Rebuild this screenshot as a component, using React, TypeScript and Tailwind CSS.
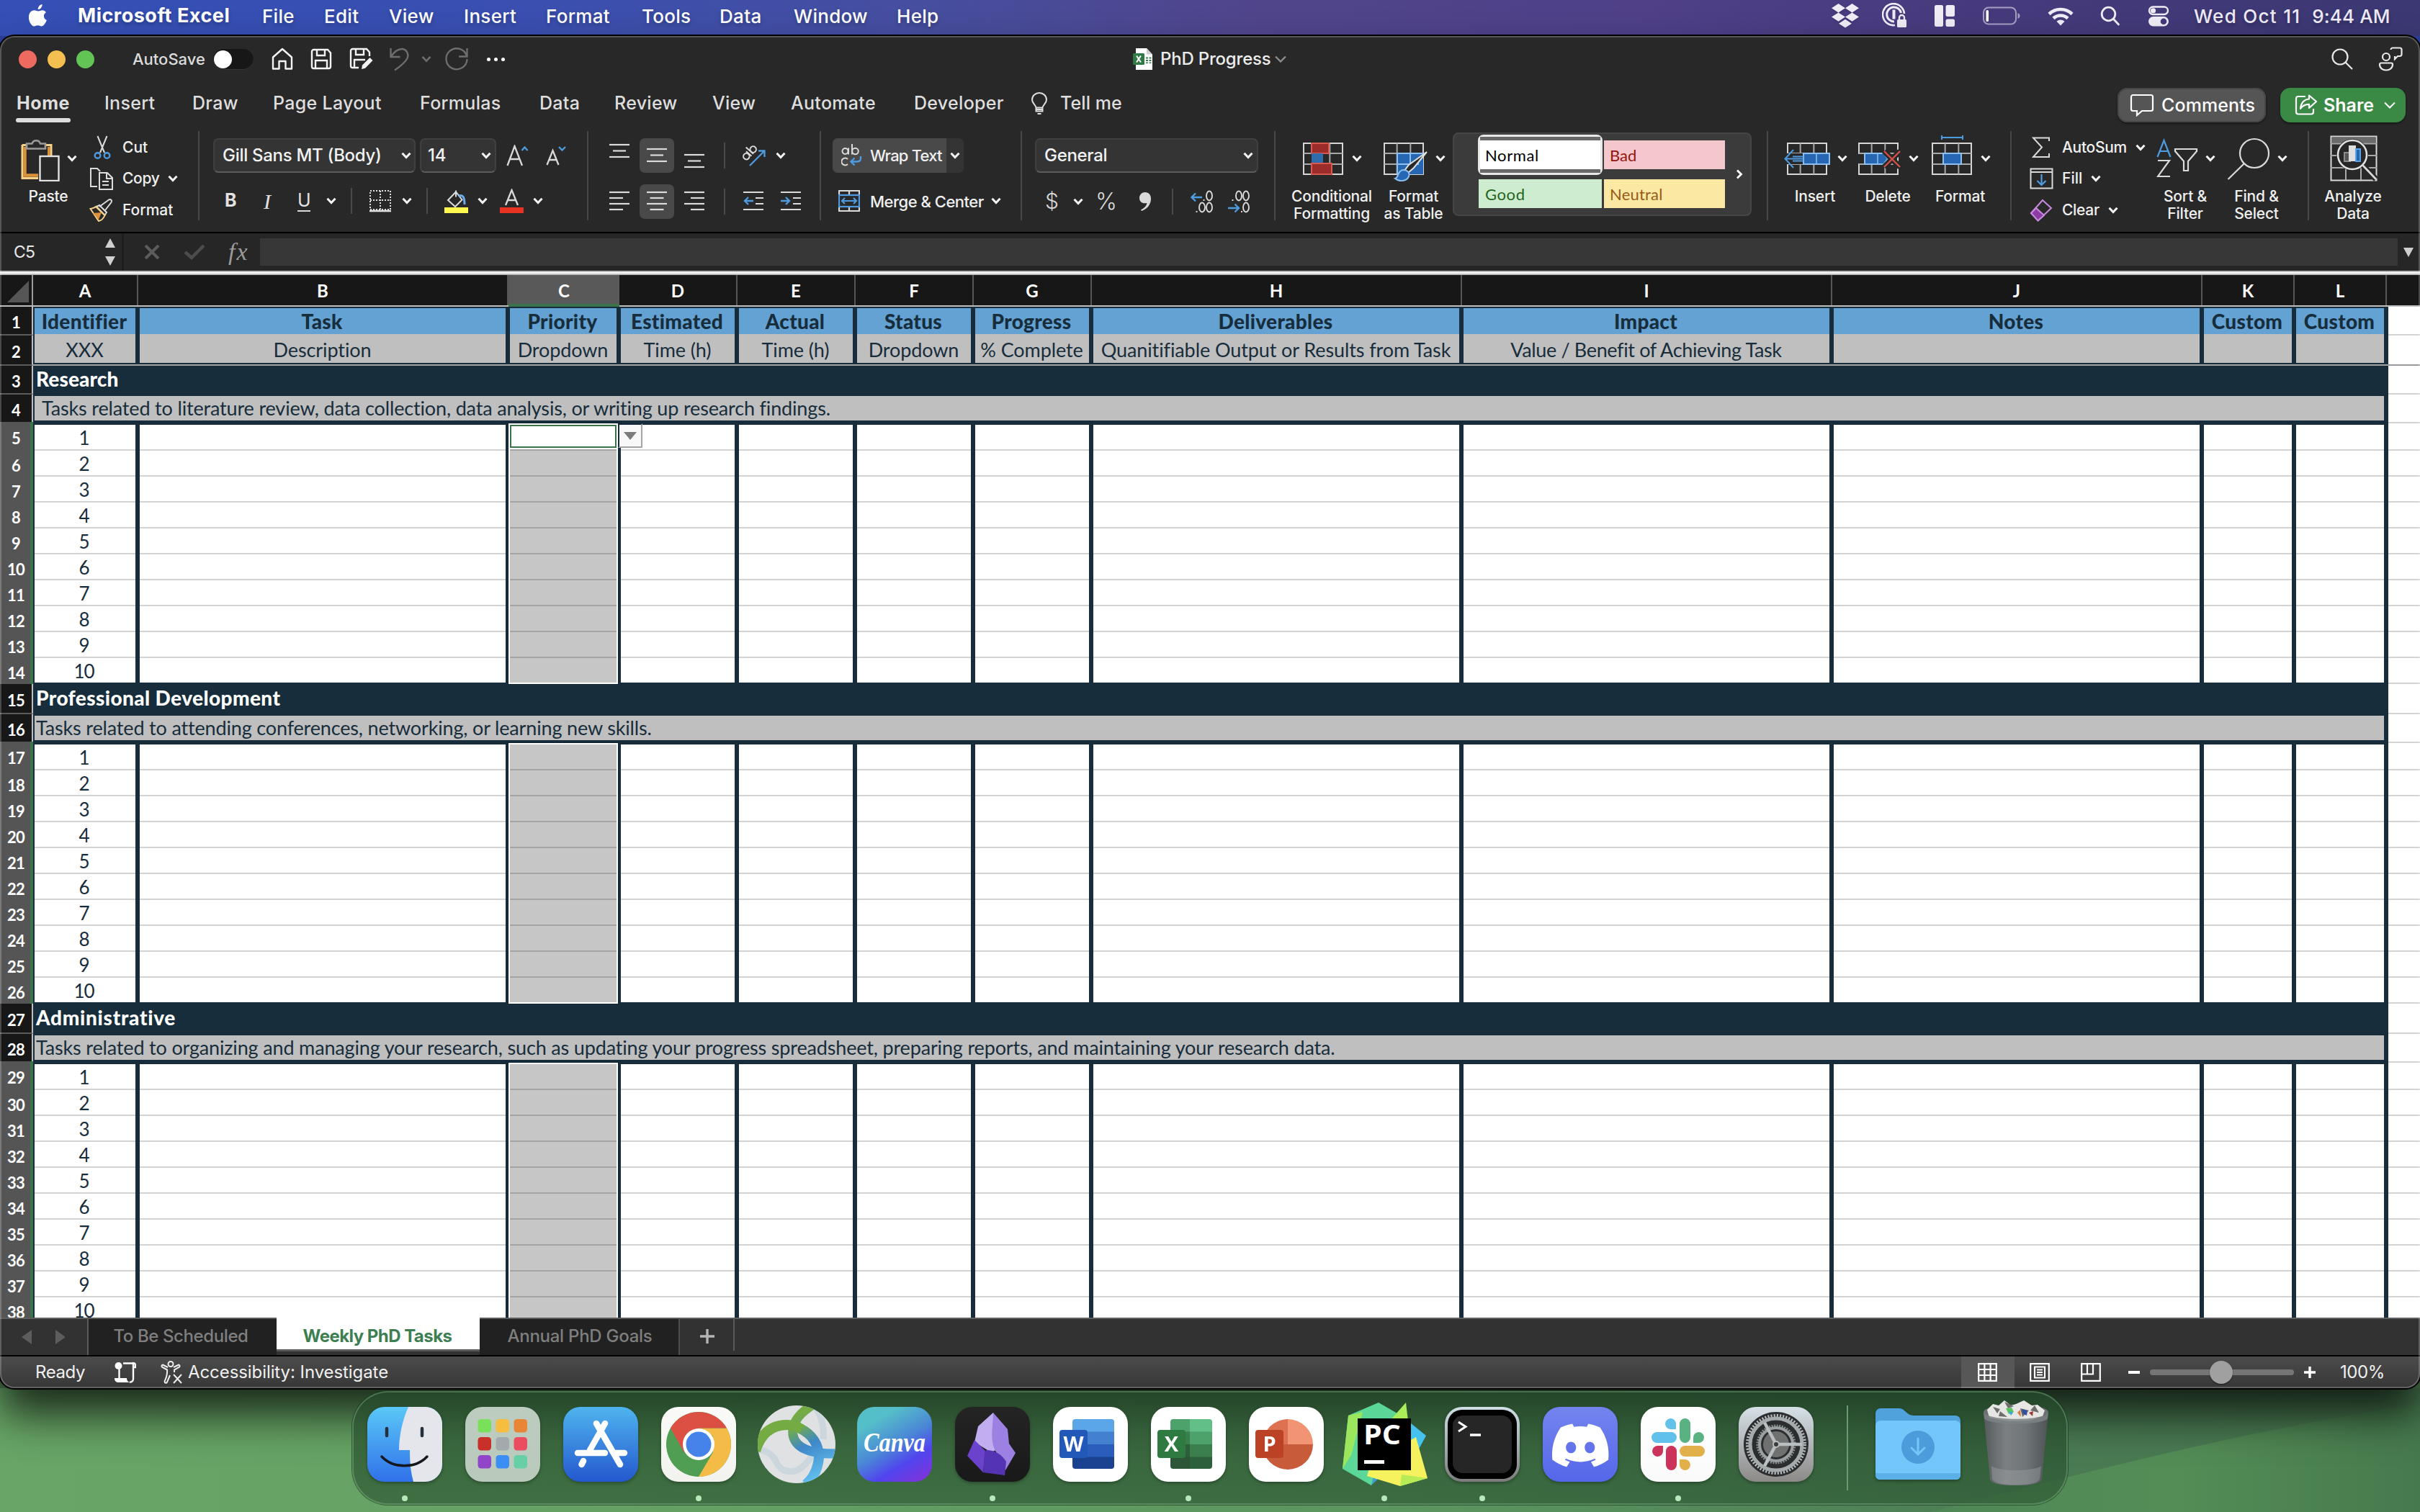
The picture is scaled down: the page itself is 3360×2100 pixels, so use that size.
import React from "react";

type Kids = { children?: React.ReactNode };

/* ---------- small shared pieces ---------- */

function Chev({ className = "" }: { className?: string }) {
  return (
    <svg className={`h-[10px] w-[14px] shrink-0 ${className}`} viewBox="0 0 14 10" fill="none" stroke="#f2f2f2" strokeWidth="3">
      <path d="M1.500 1.800 7 7.600l5.500-5.800" />
    </svg>
  );
}

function GroupSep() {
  return <div className="mt-[2px] h-[124px] w-[2px] shrink-0 bg-[#484848]" />;
}

function SmallSep({ className }: { className: string }) {
  return <div className={`h-[36px] w-[2px] shrink-0 bg-[#4a4a4a] ${className}`} />;
}

function BigButton({ className, icon, lines, chev = true }: { className: string; icon: React.ReactNode; lines: string[]; chev?: boolean }) {
  return (
    <div className={`flex shrink-0 flex-col items-center pt-[8px] ${className}`}>
      <div className="flex h-[64px] items-center gap-[10px]">
        {icon}
        {chev && <Chev />}
      </div>
      <div className="mt-[9px] -ml-[2px] text-center text-[21px] leading-[24px] font-medium tracking-[-0.2px] whitespace-nowrap text-[#f0f0f0]">
        {lines.map((l) => (
          <div key={l}>{l}</div>
        ))}
      </div>
    </div>
  );
}

/* ---------- menu bar ---------- */

const menuItems: [string, string][] = [
  ["File", "w-[86px]"],
  ["Edit", "w-[90px]"],
  ["View", "w-[104px]"],
  ["Insert", "w-[114px]"],
  ["Format", "w-[133px]"],
  ["Tools", "w-[108px]"],
  ["Data", "w-[103px]"],
  ["Window", "w-[143px]"],
  ["Help", "w-[80px]"],
];

function MenuBar() {
  return (
    <div className="flex h-[50px] shrink-0 items-start bg-[linear-gradient(90deg,#344fb6_0%,#3a4fb0_22%,#464e9f_38%,#50458b_52%,#4f4088_68%,#463a7c_82%,#3b3873_100%)] text-[26px] font-medium tracking-[0.3px] whitespace-nowrap text-white">
      <div className="flex h-[44px] w-full items-center [text-shadow:0_3px_5px_rgba(0,0,0,0.25)]">
        <svg className="ml-[40px] h-[32px] w-[28px]" viewBox="0 0 28 32" fill="#fff">
          <path d="M18.600 0c.2 1.800-.5 3.600-1.500 4.900-1.100 1.300-2.800 2.300-4.400 2.200-.2-1.700.6-3.500 1.600-4.700C15.400 1.100 17.200.1 18.600 0zM23.900 11.200c-1.900 1.200-3 2.800-3 5.100 0 2.600 1.400 4.600 3.900 5.600-.5 1.700-1.300 3.200-2.300 4.700-1.300 1.900-2.700 3.900-4.900 3.900-2.100 0-2.700-1.200-5.100-1.200s-3.200 1.200-5.100 1.300c-2.100.1-3.700-2.100-5-4C-.3 22.700-1.200 15.900 1.500 11.800 2.900 9.600 5.200 8.300 7.500 8.300c2.300 0 3.800 1.300 5.700 1.300 1.900 0 3-1.300 5.700-1.300 1.900 0 3.900 1 5 2.900z" />
        </svg>
        <div className="ml-[40px] w-[256px] text-[27px] font-bold tracking-[0.5px]">Microsoft Excel</div>
        {menuItems.map(([t, w]) => (
          <div key={t} className={`shrink-0 ${w}`}>{t}</div>
        ))}
        <div className="flex-1" />
        <div className="flex w-[817px] shrink-0 items-center text-[#eeeaf6]">
          <svg className="h-[34px] w-[38px] drop-shadow" viewBox="0 0 38 34" fill="#efecf6">
            <path d="M9.500 0 19 6.200 9.500 12.400 0 6.200zM28.500 0 38 6.200l-9.500 6.200L19 6.200zM9.500 12.400 19 18.600l-9.500 6.200L0 18.600zM28.500 12.400l9.500 6.200-9.500 6.200L19 18.600zM19 21.800l9 5.900-9 5.900-9-5.900z" />
          </svg>
          <svg className="ml-[32px] h-[36px] w-[36px]" viewBox="0 0 36 36" fill="none" stroke="#efecf6">
            <path d="M31 15A15 15 0 1 0 18 31" strokeWidth="2.600" />
            <path d="M26.500 14A10 10 0 1 0 17 26" strokeWidth="3" />
            <path d="M16.500 9.500v13" strokeWidth="4" />
            <rect x="21" y="23" width="13" height="11" rx="1.500" fill="#efecf6" stroke="none" />
            <path d="M24 24v-3.500a3.500 3.500 0 0 1 7 0V24" strokeWidth="2.400" />
          </svg>
          <svg className="ml-[37px] h-[30px] w-[28px]" viewBox="0 0 28 30" fill="#efecf6">
            <rect width="12" height="30" rx="2.500" />
            <rect x="15.500" width="12.500" height="16" rx="2.500" />
            <rect x="15.500" y="19.500" width="12.500" height="10.500" rx="2.500" />
          </svg>
          <svg className="ml-[39px] h-[26px] w-[52px]" viewBox="0 0 52 26" fill="none">
            <rect x="1" y="1.500" width="45" height="23" rx="7" stroke="#a79ec4" strokeWidth="2" />
            <rect x="4.500" y="5" width="3.500" height="16" rx="1.500" fill="#fff" />
            <path d="M48.500 9c2 .8 3 2.200 3 4s-1 3.200-3 4z" fill="#a79ec4" />
          </svg>
          <svg className="ml-[38px] h-[27px] w-[36px]" viewBox="0 0 36 27" fill="none" stroke="#efecf6" strokeWidth="4.600">
            <path d="M2 10.500a23 23 0 0 1 32 0" />
            <path d="M8 16.500a14.500 14.500 0 0 1 20 0" />
            <path d="M18 26.500l-5.500-5.800a8 8 0 0 1 11 0z" fill="#efecf6" stroke="none" />
          </svg>
          <svg className="ml-[37px] h-[28px] w-[28px]" viewBox="0 0 28 28" fill="none" stroke="#efecf6" strokeWidth="2.800">
            <circle cx="11.500" cy="11.500" r="9.300" />
            <path d="m18.500 18.500 7 7.500" strokeLinecap="round" />
          </svg>
          <svg className="ml-[38px] h-[29px] w-[30px]" viewBox="0 0 30 29" fill="none">
            <rect x="2" y="1.500" width="26" height="10.500" rx="5.250" stroke="#efecf6" strokeWidth="2.400" />
            <circle cx="7.500" cy="6.750" r="3.600" fill="#efecf6" />
            <rect x="1" y="15" width="28" height="13.500" rx="6.750" fill="#efecf6" />
            <circle cx="22" cy="21.700" r="4.300" fill="#443a7b" />
          </svg>
          <div className="ml-[34px] tracking-[1.3px]">Wed Oct 11</div>
          <div className="ml-[16px] tracking-[0.1px]">9:44 AM</div>
        </div>
      </div>
    </div>
  );
}

/* ---------- title bar ---------- */

function TitleBar() {
  return (
    <div className="flex h-[64px] items-center whitespace-nowrap">
      <div className="ml-[26px] flex gap-[15px]">
        <div className="h-[25px] w-[25px] rounded-full bg-[#ec6a5f]" />
        <div className="h-[25px] w-[25px] rounded-full bg-[#f4bf50]" />
        <div className="h-[25px] w-[25px] rounded-full bg-[#61c455]" />
      </div>
      <div className="ml-[53px] w-[112px] text-[22px] font-medium text-[#dcdcdc]">AutoSave</div>
      <div className="h-[29px] w-[56px] rounded-full bg-[#171717] shadow-[inset_0_-1px_1px_#3a3a3a]">
        <div className="mt-[2px] ml-[1px] h-[25px] w-[25px] rounded-full bg-white" />
      </div>
      <svg className="ml-[25px] h-[32px] w-[30px]" viewBox="0 0 30 32" fill="none" stroke="#f4f4f4" strokeWidth="2.400">
        <path d="M2 13.500 15 2l13 11.500V29.500h-8.500V19h-9v10.500H2z" strokeLinejoin="round" />
      </svg>
      <svg className="ml-[24px] h-[30px] w-[30px]" viewBox="0 0 30 30" fill="none" stroke="#f4f4f4" strokeWidth="2.400">
        <path d="M2 4.500A2.500 2.500 0 0 1 4.500 2H24l4 4.500v19a2.500 2.500 0 0 1-2.500 2.500h-21A2.500 2.500 0 0 1 2 25.500zM9 2v8h11V2M7 28V17h16v11" />
      </svg>
      <svg className="ml-[24px] h-[32px] w-[33px]" viewBox="0 0 33 32" fill="none" stroke="#f4f4f4" strokeWidth="2.400">
        <path d="M13 28H4.500A2.500 2.500 0 0 1 2 25.500v-21A2.500 2.500 0 0 1 4.500 2H24l4 4.500V12M9 2v8h11V2M7 28V17h15" />
        <path d="m17 30 1-5.500L28.500 14l4 4L22 28.700z" fill="#f4f4f4" stroke="none" />
      </svg>
      <svg className="ml-[22px] h-[34px] w-[30px]" viewBox="0 0 30 34" fill="none" stroke="#6d6d6d" strokeWidth="2.400">
        <path d="M2.500 2v12h13M3 13.500C8 6 13 2.500 19 3c6 1 9 8 6.500 13C23 21 16 27 8 32.500" />
      </svg>
      <svg className="ml-[15px] h-[10px] w-[14px]" viewBox="0 0 14 10" fill="none" stroke="#6d6d6d" strokeWidth="2.600"><path d="M1.500 1.800 7 7.600l5.500-5.800" /></svg>
      <svg className="ml-[18px] h-[34px] w-[34px]" viewBox="0 0 34 34" fill="none" stroke="#6d6d6d" strokeWidth="2.400">
        <path d="M31 13A14.500 14.500 0 1 0 31.500 17M31.500 2v11.500H20" />
      </svg>
      <div className="ml-[25px] flex gap-[5px]">
        <div className="h-[5px] w-[5px] rounded-full bg-white" />
        <div className="h-[5px] w-[5px] rounded-full bg-white" />
        <div className="h-[5px] w-[5px] rounded-full bg-white" />
      </div>
      <div className="flex-1" />
      <div className="flex w-[1787px] shrink-0 items-center">
        <svg className="h-[30px] w-[28px]" viewBox="0 0 28 30">
          <path d="M4 0h15l8 8.500V30H4z" fill="#fff" />
          <path d="M19 0v8.500h8z" fill="#cfcfcf" />
          <path d="M18 12.500h3v2h-3zm4.500 0h3v2h-3zM18 16h3v2h-3zm4.500 0h3v2h-3zM18 19.500h3v1.500h-3zm4.500 0h3v1.500h-3z" fill="#3f7f50" />
          <rect x="0" y="7" width="16" height="16" rx="1.500" fill="#2f7a44" />
          <path d="m5 10.500 6 9m0-9-6 9" stroke="#fff" strokeWidth="2" />
        </svg>
        <div className="ml-[10px] w-[158px] text-[24px] font-medium tracking-[-0.2px] text-[#ececec]">PhD Progress</div>
        <svg className="h-[10px] w-[18px]" viewBox="0 0 18 10" fill="none" stroke="#8c8c8c" strokeWidth="2.400"><path d="m2 1.500 7 7 7-7" /></svg>
        <svg className="ml-[1450px] h-[30px] w-[30px]" viewBox="0 0 30 30" fill="none" stroke="#e9e9e9" strokeWidth="2.200">
          <circle cx="12" cy="12" r="10.500" />
          <path d="m19.500 19.500 9.500 9.500" />
        </svg>
        <svg className="ml-[35px] h-[34px] w-[34px]" viewBox="0 0 34 34" fill="none" stroke="#e9e9e9" strokeWidth="2.200">
          <circle cx="11" cy="14" r="5" />
          <path d="M2 24.500A2 2 0 0 1 4 22.500h14a2 2 0 0 1 2 2c0 5-4 8-9 8s-9-3-9-8zM17.500 4a2.500 2.500 0 0 1 2.500-2.500h10A2.500 2.500 0 0 1 32.500 4v6.500A2.500 2.500 0 0 1 30 13h-3l-4 4v-4" />
        </svg>
      </div>
    </div>
  );
}

/* ---------- ribbon tabs ---------- */

const tabs: [string, string][] = [
  ["Insert", "w-[122px]"],
  ["Draw", "w-[112px]"],
  ["Page Layout", "w-[204px]"],
  ["Formulas", "w-[166px]"],
  ["Data", "w-[104px]"],
  ["Review", "w-[136px]"],
  ["View", "w-[109px]"],
  ["Automate", "w-[171px]"],
  ["Developer", "w-[162px]"],
];

function TabRow() {
  return (
    <div className="flex h-[66px] items-start text-[25px] font-medium tracking-[0.3px] whitespace-nowrap text-[#dedede]">
      <div className="ml-[22px] flex w-[123px] shrink-0 flex-col items-start">
        <div className="flex h-[50px] items-center pt-[9px] pl-[1px] font-bold tracking-[0.6px]">Home</div>
        <div className="h-[6px] w-[76px] rounded-full bg-[#dedede]" />
      </div>
      <div className="flex h-[59px] items-center">
        {tabs.map(([t, w]) => (
          <div key={t} className={`shrink-0 ${w}`}>{t}</div>
        ))}
        <svg className="h-[32px] w-[24px]" viewBox="0 0 24 32" fill="none" stroke="#dedede" strokeWidth="2">
          <path d="M7.500 21.500C7 17.500 2 15.500 2 10.500a10 9.500 0 0 1 20 0c0 5-5 7-5.500 11zM7.500 21.500v5h9v-5M7.500 24h9M9.500 30h5" />
        </svg>
        <div className="ml-[17px] tracking-[0.1px]">Tell me</div>
      </div>
      <div className="flex-1" />
      <div className="mt-[8px] flex h-[48px] w-[206px] items-center rounded-[14px] bg-[#555555] pl-[17px] text-white shadow-[inset_0_0_0_2px_#474747,0_2px_3px_rgba(0,0,0,0.4)]">
        <svg className="h-[32px] w-[34px]" viewBox="0 0 34 32" fill="none" stroke="#fff" strokeWidth="2.200">
          <path d="M2 4.500A2.500 2.500 0 0 1 4.500 2h25A2.500 2.500 0 0 1 32 4.500v17a2.500 2.500 0 0 1-2.500 2.500H17l-7 6v-6H4.500A2.500 2.500 0 0 1 2 21.500z" />
        </svg>
        <div className="mt-[2px] ml-[10px] tracking-[0.1px]">Comments</div>
      </div>
      <div className="mt-[8px] mr-[20px] ml-[20px] flex h-[48px] w-[174px] items-center rounded-[14px] bg-[#3a8945] pl-[20px] text-white shadow-[0_2px_3px_rgba(0,0,0,0.4)]">
        <svg className="h-[32px] w-[32px]" viewBox="0 0 32 32" fill="none" stroke="#fff" strokeWidth="2.200">
          <path d="M15 4H5a3 3 0 0 0-3 3v18.500a3 3 0 0 0 3 3h18a3 3 0 0 0 3-3V21" />
          <path d="M20 2.500 30 11l-10 9v-5.200c-5 0-9 1.700-12 6C9 13 13 8 20 7.500z" strokeLinejoin="round" />
        </svg>
        <div className="mt-[2px] ml-[8px] w-[83px] font-semibold tracking-[0px]">Share</div>
        <svg className="h-[10px] w-[18px]" viewBox="0 0 18 10" fill="none" stroke="#fff" strokeWidth="2"><path d="m2 1.500 7 7 7-7" /></svg>
      </div>
    </div>
  );
}

/* ---------- ribbon ---------- */

function Lines({ rows, w = 30, y0, step }: { rows: [number, number][]; w?: number; y0: number; step: number }) {
  return (
    <svg className="h-[48px] w-[30px] shrink-0" viewBox={`0 0 ${w} 48`} stroke="#dadada" strokeWidth="2.200">
      {rows.map(([a, b], i) => (
        <path key={i} d={`M${a} ${y0 + i * step}H${b}`} />
      ))}
    </svg>
  );
}

function Pressed({ children }: Kids) {
  return <div className="flex h-[48px] w-[48px] shrink-0 items-center justify-center rounded-[7px] bg-[#494949]">{children}</div>;
}

function ClipboardGroup() {
  return (
    <div className="flex w-[275px] shrink-0">
      <BigButton
        className="w-[118px] pl-[18px]"
        lines={["Paste"]}
        icon={
          <svg className="h-[64px] w-[54px]" viewBox="0 0 54 64" fill="none">
            <path d="M2 13.500h40V30M2 13v46.500h22" stroke="#f5d189" strokeWidth="3" />
            <path d="M5.500 16v39.500H24M38.500 16v14" stroke="#d9913a" strokeWidth="4.500" />
            <rect x="8" y="16" width="29" height="36" fill="#282828" />
            <path d="M8 18.500v-7h7.500a6 6 0 0 1 11.500 0H34v7z" stroke="#9a9a9a" strokeWidth="2.600" fill="#282828" />
            <rect x="26.500" y="29" width="26" height="34" stroke="#e2e2e2" strokeWidth="2.400" fill="#282828" />
          </svg>
        }
      />
      <div className="flex flex-col pt-[6px] pl-[6px] text-[21px] font-medium text-[#f0f0f0]">
        <div className="flex h-[36px] items-center pt-[2px]">
          <svg className="ml-[6px] h-[34px] w-[24px]" viewBox="0 0 24 34" fill="none">
            <path d="M5.500 1 15 24M18.500 1 9 24" stroke="#dcdcdc" strokeWidth="2" />
            <circle cx="5.500" cy="28" r="3.800" stroke="#4f9be0" strokeWidth="2.400" />
            <circle cx="18.500" cy="28" r="3.800" stroke="#4f9be0" strokeWidth="2.400" />
          </svg>
          <div className="ml-[16px]">Cut</div>
        </div>
        <div className="mt-[8px] flex h-[36px] items-center">
          <svg className="h-[32px] w-[34px]" viewBox="0 0 34 32" fill="none" stroke="#dcdcdc" strokeWidth="2">
            <path d="M11 27H2V2h9l4 4" />
            <path d="M14 8h11l7 7v16H14zM24 8v8h8M18 20h9M18 25h9" />
          </svg>
          <div className="ml-[12px] w-[63px] tracking-[-0.3px]">Copy</div>
          <Chev />
        </div>
        <div className="mt-[8px] flex h-[36px] items-center">
          <svg className="h-[34px] w-[34px]" viewBox="0 0 34 34" fill="none" strokeWidth="2">
            <path d="M14 12 27 2.500c3-1.500 5 1 3.500 3.500L22 17" stroke="#dcdcdc" />
            <path d="m10 12 4-2 10 10-2.500 4z" stroke="#dcdcdc" />
            <path d="M9 12C7 14 4 14.500 1.500 15L13 32c4-1 7-4 8.500-8z" stroke="#f5d189" />
            <path d="m5 21 12-1-4 10z" fill="#d9913a" />
          </svg>
          <div className="ml-[12px]">Format</div>
        </div>
      </div>
    </div>
  );
}

const fieldCls = "flex h-[48px] shrink-0 items-center rounded-[7px] border-2 border-[#404040] border-b-[#5c5c5c] bg-[#343434] text-[24px] font-medium tracking-[-0.3px] text-[#f2f2f2]";

function FontGroup() {
  return (
    <div className="flex w-[538px] shrink-0 flex-col gap-[16px] pt-[12px] pl-[19px] whitespace-nowrap">
      <div className="flex h-[48px] items-center">
        <div className={`w-[281px] pl-[11px] ${fieldCls}`}>
          <div className="w-[248px]">Gill Sans MT (Body)</div>
          <Chev />
        </div>
        <div className={`ml-[6px] w-[106px] pl-[9px] ${fieldCls}`}>
          <div className="w-[74px]">14</div>
          <Chev />
        </div>
        <svg className="ml-[14px] h-[30px] w-[31px]" viewBox="0 0 31 30" fill="none">
          <path d="m1.500 29 10-27 10.500 27M5 20h13.500" stroke="#dadada" strokeWidth="2.300" />
          <path d="m21.500 8 4-4.500 4 4.500" stroke="#4f9be0" strokeWidth="2.400" />
        </svg>
        <svg className="ml-[24px] h-[30px] w-[30px]" viewBox="0 0 30 30" fill="none">
          <path d="M1.500 28 9.500 8l8 20M4.500 21h10.500" stroke="#dadada" strokeWidth="2.300" />
          <path d="m18 3 4.500 4.500L27 3" stroke="#4f9be0" strokeWidth="2.400" />
        </svg>
      </div>
      <div className="flex h-[46px] items-center pl-[16px] text-[25px] text-[#e2e2e2]">
        <div className="w-[54px] font-bold">B</div>
        <div className="w-[47px] font-['Liberation_Serif'] text-[30px] italic">I</div>
        <div className="flex w-[40px] flex-col items-start">
          <div className="h-[28px] leading-[28px]">U</div>
          <div className="h-[2px] w-[18px] bg-[#dadada]" />
        </div>
        <Chev />
        <SmallSep className="ml-[20px]" />
        <svg className="ml-[23px] h-[32px] w-[32px]" viewBox="0 0 32 32" fill="none" stroke="#e0e0e0" strokeWidth="2">
          <path d="M2 2h28v26H2zM16 2v26M2 15h28" strokeDasharray="2 2" />
          <path d="M1 30h30" strokeWidth="2.600" />
        </svg>
        <Chev className="ml-[14px]" />
        <SmallSep className="ml-[20px]" />
        <svg className="ml-[23px] h-[34px] w-[34px]" viewBox="0 0 34 34" fill="none">
          <path d="M16 2.500v9M16 4.500 5 16l10 9 9.500-9.500z" stroke="#dadada" strokeWidth="2" />
          <path d="M20 10c6-2 8 2 8 12" stroke="#69aef0" strokeWidth="3" />
          <rect x="0" y="26" width="33" height="8" fill="#fff94f" />
        </svg>
        <Chev className="ml-[12px]" />
        <svg className="ml-[17px] h-[34px] w-[34px]" viewBox="0 0 34 34" fill="none">
          <path d="m8 23 8.500-21L25 23M11 16h11" stroke="#dadada" strokeWidth="2.300" />
          <rect x="0" y="26" width="33" height="8" fill="#e83323" />
        </svg>
        <Chev className="ml-[12px]" />
      </div>
    </div>
  );
}

function AlignGroup() {
  return (
    <div className="flex w-[321px] shrink-0 flex-col gap-[16px] pt-[12px] pl-[29px]">
      <div className="flex h-[48px] items-center">
        <Lines rows={[[0, 28], [5, 23], [0, 28]]} y0={9} step={8.5} />
        <div className="ml-[12px]"><Pressed><Lines rows={[[1, 29], [6, 24], [1, 29]]} y0={15} step={8.5} /></Pressed></div>
        <div className="ml-[14px]"><Lines rows={[[0, 28], [5, 23], [0, 28]]} y0={23} step={8.5} /></div>
        <SmallSep className="ml-[25px]" />
        <svg className="ml-[22px] h-[34px] w-[36px]" viewBox="0 0 36 34" fill="none" strokeWidth="2">
          <g stroke="#dadada" transform="rotate(-48 12 13)">
            <circle cx="5" cy="13" r="4.200" />
            <path d="M10 8v10M14 4v14" />
            <circle cx="18.500" cy="13.500" r="4.200" />
          </g>
          <path d="M12 31 32 11M24 10.500h8.500V19" stroke="#4f9be0" strokeWidth="2.300" />
        </svg>
        <Chev className="ml-[12px]" />
      </div>
      <div className="flex h-[48px] items-center">
        <Lines rows={[[0, 28], [0, 19], [0, 28], [0, 19]]} y0={11} step={8} />
        <div className="ml-[12px]"><Pressed><Lines rows={[[1, 29], [5.5, 24.5], [1, 29], [5.5, 24.5]]} y0={11} step={8} /></Pressed></div>
        <div className="ml-[14px]"><Lines rows={[[0, 28], [9, 28], [0, 28], [9, 28]]} y0={11} step={8} /></div>
        <SmallSep className="ml-[25px]" />
        <svg className="ml-[25px] h-[48px] w-[30px]" viewBox="0 0 30 48" fill="none" stroke="#dadada" strokeWidth="2.200">
          <path d="M0 11h28M17 19h11M17 27h11M0 35h28" />
          <path d="M14 23H2m5-5-5 5 5 5" stroke="#4f9be0" strokeWidth="2.400" />
        </svg>
        <svg className="ml-[22px] h-[48px] w-[30px]" viewBox="0 0 30 48" fill="none" stroke="#dadada" strokeWidth="2.200">
          <path d="M0 11h28M17 19h11M17 27h11M0 35h28" />
          <path d="M0 23h12m-5-5 5 5-5 5" stroke="#4f9be0" strokeWidth="2.400" />
        </svg>
      </div>
    </div>
  );
}

function WrapGroup() {
  return (
    <div className="flex w-[277px] shrink-0 flex-col gap-[16px] pt-[12px] pl-[16px] text-[22px] font-medium whitespace-nowrap text-[#f0f0f0]">
      <div className="flex h-[48px] w-[182px] items-center overflow-hidden rounded-[7px] bg-[#343434]">
        <div className="flex h-[48px] w-[158px] shrink-0 items-center bg-[#494949] pl-[12px]">
          <svg className="h-[34px] w-[30px]" viewBox="0 0 30 34" fill="none" stroke="#dadada" strokeWidth="2">
            <circle cx="5.500" cy="11" r="4" /><path d="M10 6.500v9M15 1v14.500" /><circle cx="19.500" cy="11" r="4.300" />
            <path d="M9 22a5 5 0 1 0 0 7" />
            <path d="M27 18v3c0 3-2 4.500-5 4.500h-8M18.500 20.500 13.500 25.500l5 5" stroke="#4f9be0" strokeWidth="2.400" />
          </svg>
          <div className="ml-[10px] tracking-[-0.8px]">Wrap Text</div>
        </div>
        <Chev className="ml-[5px]" />
      </div>
      <div className="flex h-[46px] items-center">
        <svg className="ml-[8px] h-[30px] w-[30px]" viewBox="0 0 30 30" fill="none" strokeWidth="2.200">
          <path d="M1 7V1h28v6M15 1v6M1 23v6h28v-6M15 23v6" stroke="#dadada" />
          <rect x="1" y="7" width="28" height="16" stroke="#4f9be0" />
          <path d="M5 15h20M9 11l-4 4 4 4M21 11l4 4-4 4" stroke="#4f9be0" />
        </svg>
        <div className="mt-[2px] ml-[14px] w-[168px] tracking-[-0.5px]">Merge &amp; Center</div>
        <Chev />
      </div>
    </div>
  );
}

function NumberGroup() {
  return (
    <div className="flex w-[350px] shrink-0 flex-col gap-[16px] pt-[12px] pl-[18px] whitespace-nowrap">
      <div className={`w-[310px] pl-[11px] ${fieldCls}`}>
        <div className="w-[276px]">General</div>
        <Chev />
      </div>
      <div className="flex h-[47px] items-center text-[#dadada]">
        <div className="ml-[14px] w-[39px] text-[30px] font-light">$</div>
        <Chev />
        <div className="ml-[17px] w-[61px] text-[32px] font-light tracking-tight">%</div>
        <svg className="h-[26px] w-[17px]" viewBox="0 0 17 26" fill="#dadada"><path d="M8 0c5 0 8 3.500 8 9 0 8-5 14-13 17l-1-1.500C7 22 10 18.500 10.500 15 4 16.500 0 13 0 8c0-4.500 3.500-8 8-8z" /></svg>
        <SmallSep className="ml-[28px]" />
        <svg className="ml-[23px] h-[34px] w-[34px]" viewBox="0 0 34 34" fill="none" stroke="#dadada" strokeWidth="1.900">
          <ellipse cx="27" cy="9" rx="4" ry="6.500" /><ellipse cx="17" cy="25" rx="4" ry="6.500" /><ellipse cx="27" cy="25" rx="4" ry="6.500" />
          <path d="M19.500 14v2M9.500 30v2" />
          <path d="M17 11H2m6-5.500L2.500 11 8 16.500" stroke="#4f9be0" strokeWidth="2.400" />
        </svg>
        <svg className="ml-[17px] h-[34px] w-[34px]" viewBox="0 0 34 34" fill="none" stroke="#dadada" strokeWidth="1.900">
          <ellipse cx="27" cy="9" rx="4" ry="6.500" /><ellipse cx="17" cy="9" rx="4" ry="6.500" /><ellipse cx="27" cy="25" rx="4" ry="6.500" />
          <path d="M8.500 14v2M21 30v2" />
          <path d="M2 26h15m-5.500-5.500L17 26l-5.500 5.500" stroke="#4f9be0" strokeWidth="2.400" />
        </svg>
      </div>
    </div>
  );
}

function GridBase({ w = 56 }: { w?: number }) {
  return (
    <g stroke="#d6d6d6" fill="none" strokeWidth="2">
      <path d={`M1 11h${w - 2}v43H1z`} />
      <path d={`M${w / 3} 11v43M${(w * 2) / 3} 11v43M1 25h${w - 2}M1 40h${w - 2}`} stroke="#a8a8a8" />
    </g>
  );
}

function StylesGroup() {
  return (
    <div className="flex w-[682px] shrink-0 pl-[19px]">
      <BigButton
        className="w-[120px]"
        lines={["Conditional", "Formatting"]}
        icon={
          <svg className="h-[64px] w-[58px]" viewBox="0 0 58 64">
            <GridBase w={56} />
            <rect x="12" y="11" width="24" height="14" fill="#9b2c2a" stroke="#d65a50" strokeWidth="2" />
            <rect x="12" y="25" width="16" height="15" fill="#2f6cab" />
            <rect x="12" y="39" width="28" height="15" fill="#9b2c2a" stroke="#d65a50" strokeWidth="2" />
          </svg>
        }
      />
      <BigButton
        className="w-[107px]"
        lines={["Format", "as Table"]}
        icon={
          <svg className="h-[64px] w-[62px]" viewBox="0 0 62 64" fill="none">
            <GridBase w={56} />
            <path d="M19 25h36v29H19z" fill="#2666b3" />
            <path d="M19 54V25h36M19 40h30M37 25v20" stroke="#8cc0f0" strokeWidth="2" />
            <path d="M60 23 42 45l-9 8-4-4 6-8z" fill="#282828" stroke="#dedede" strokeWidth="2" />
            <path d="M16 60c5-1 3-11 11-12 6 0 10 4 8 9-3 7-13 8-19 3z" fill="#2666b3" stroke="#8cc0f0" strokeWidth="2" />
          </svg>
        }
      />
      <div className="mt-[4px] flex h-[116px] w-[415px] items-center rounded-[8px] border-2 border-[#464646] bg-[#3b3b3b] pl-[34px] font-['Lato'] text-[22px]">
        <div className="grid grid-cols-[171px_168px] gap-x-[3px] gap-y-[14px]">
          <div className="relative flex h-[40px] items-center bg-white pl-[9px] tracking-[0.6px] text-black">
            Normal
            <div className="absolute -inset-x-[1px] -inset-y-[8px] rounded-[8px] border-[3px] border-[#e9e9e9]" />
            <div className="absolute inset-x-[2px] -top-[5px] h-[5px] bg-[#686868]" />
            <div className="absolute inset-x-[2px] -bottom-[5px] h-[5px] bg-[#686868]" />
          </div>
          <div className="flex h-[40px] items-center bg-[#f4c7cd] pl-[8px] text-[#95140f]">Bad</div>
          <div className="flex h-[40px] items-center bg-[#ceecd0] pl-[9px] tracking-[0.6px] text-[#23651b]">Good</div>
          <div className="flex h-[40px] items-center bg-[#fbe9a3] pl-[8px] tracking-[0.2px] text-[#955b17]">Neutral</div>
        </div>
        <svg className="ml-[15px] h-[14px] w-[10px]" viewBox="0 0 10 14" fill="none" stroke="#fff" strokeWidth="2.800"><path d="m2 1.500 5.500 5.500L2 12.500" /></svg>
      </div>
    </div>
  );
}

function CellsGroup() {
  return (
    <div className="flex w-[336px] shrink-0 pl-[16px]">
      <BigButton
        className="w-[100px]"
        lines={["Insert"]}
        icon={
          <svg className="h-[64px] w-[64px]" viewBox="0 0 64 64" fill="none">
            <g transform="translate(4 0)"><GridBase w={56} /></g>
            <rect x="0" y="25" width="26" height="15" fill="#282828" />
            <rect x="27" y="25" width="36" height="15" fill="#2666b3" stroke="#8cc0f0" strokeWidth="2" />
            <path d="M45 25v15" stroke="#8cc0f0" strokeWidth="1.500" />
            <path d="M27 32.500H2M13 20 1.500 32.500 13 45M27 29.500H12M27 35.500H12" stroke="#4f9be0" strokeWidth="2" />
          </svg>
        }
      />
      <BigButton
        className="w-[102px]"
        lines={["Delete"]}
        icon={
          <svg className="h-[64px] w-[60px]" viewBox="0 0 60 64" fill="none">
            <GridBase w={56} />
            <rect x="0" y="26" width="8" height="13" fill="#282828" />
            <path d="M9 25h26l6 7.500-6 7.500H9z" fill="#2666b3" stroke="#8cc0f0" strokeWidth="2" />
            <path d="M27 25v15" stroke="#8cc0f0" strokeWidth="1.500" />
            <path d="m36 22 22 22M58 22 36 44" stroke="#282828" strokeWidth="8" />
            <path d="m36 22 22 22M58 22 36 44" stroke="#d4504a" strokeWidth="2.400" />
          </svg>
        }
      />
      <BigButton
        className="w-[99px]"
        lines={["Format"]}
        icon={
          <svg className="h-[64px] w-[58px]" viewBox="0 0 58 64" fill="none">
            <GridBase w={56} />
            <rect x="16" y="25" width="25" height="15" fill="#2666b3" stroke="#8cc0f0" strokeWidth="2" />
            <path d="M14 3h29M14 0v6M43 0v6" stroke="#4f9be0" strokeWidth="2" />
          </svg>
        }
      />
    </div>
  );
}

function EditGroup() {
  return (
    <div className="flex w-[411px] shrink-0 pl-[25px] whitespace-nowrap">
      <div className="flex w-[164px] shrink-0 flex-col pt-[6px] text-[21px] font-medium text-[#f0f0f0]">
        <div className="flex h-[36px] items-center pt-[2px]">
          <svg className="ml-[3px] h-[30px] w-[26px]" viewBox="0 0 26 30" fill="none" stroke="#dadada" strokeWidth="2"><path d="M24 6V1.500H2L14 14.500 2 28h22v-5" /></svg>
          <div className="ml-[16px] w-[102px] tracking-[-0.3px]">AutoSum</div>
          <Chev />
        </div>
        <div className="mt-[8px] flex h-[36px] items-center">
          <svg className="h-[30px] w-[33px]" viewBox="0 0 33 30" fill="none" stroke="#dadada" strokeWidth="2">
            <path d="M1.500 1.500h30v27h-30zM1.500 6h30" />
            <path d="M16.500 9v15m-6-6 6 6 6-6" stroke="#4f9be0" strokeWidth="2.200" />
          </svg>
          <div className="ml-[12px] w-[40px]">Fill</div>
          <Chev />
        </div>
        <div className="mt-[8px] flex h-[36px] items-center">
          <svg className="h-[32px] w-[32px]" viewBox="0 0 32 32" fill="none" stroke="#c98add" strokeWidth="2">
            <path d="M18 2 30 13 12 30 2 20z" />
            <path d="m9 13 11 10-8.500 7.500L2 20z" fill="#8c3ca5" />
          </svg>
          <div className="ml-[13px] w-[64px] tracking-[-0.3px]">Clear</div>
          <Chev />
        </div>
      </div>
      <BigButton
        className="w-[106px]"
        lines={["Sort &", "Filter"]}
        icon={
          <svg className="h-[64px] w-[58px]" viewBox="0 0 58 64" fill="none" strokeWidth="2.200">
            <path d="m1.500 30 9-23 9 23M5 22h11.500" stroke="#4f9be0" />
            <path d="M2 35h16L2 57h17M26 19h30v3L44 36v13h-6V36L26 22z" stroke="#dadada" />
          </svg>
        }
      />
      <BigButton
        className="w-[92px]"
        lines={["Find &", "Select"]}
        icon={
          <svg className="h-[64px] w-[60px]" viewBox="0 0 60 64" fill="none" stroke="#dadada" strokeWidth="2.200">
            <circle cx="38" cy="25" r="20" />
            <path d="M24 39 1.500 61" />
          </svg>
        }
      />
    </div>
  );
}

function AnalyzeGroup() {
  return (
    <BigButton
      className="w-[124px]"
      chev={false}
      lines={["Analyze", "Data"]}
      icon={
        <svg className="h-[64px] w-[66px]" viewBox="0 0 66 64" fill="none" strokeWidth="2">
          <path d="M1.500 1.500h63v61h-63z" stroke="#dadada" />
          <path d="M2.500 2.500h61v8h-61z" fill="#6a6a6a" />
          <path d="M1 11.500h64M1 28h64M1 45h64M22 45v17M43 45v17" stroke="#a9a9a9" />
          <circle cx="31" cy="27" r="22" fill="#282828" />
          <circle cx="31" cy="27" r="20" stroke="#e2e2e2" strokeWidth="2.600" />
          <path d="M46 42 64 61" stroke="#282828" strokeWidth="8" />
          <path d="M45 41 64 61" stroke="#dadada" strokeWidth="2.600" />
          <rect x="20" y="24" width="8" height="12" fill="#555" stroke="#8c8c8c" />
          <rect x="26" y="14" width="10" height="22" fill="#dedede" />
          <rect x="36" y="19" width="6" height="17" fill="#2666b3" stroke="#5aa2e6" />
        </svg>
      }
    />
  );
}

function Ribbon() {
  return (
    <div className="flex h-[142px] items-start">
      <ClipboardGroup />
      <GroupSep />
      <FontGroup />
      <GroupSep />
      <AlignGroup />
      <GroupSep />
      <WrapGroup />
      <GroupSep />
      <NumberGroup />
      <GroupSep />
      <StylesGroup />
      <GroupSep />
      <CellsGroup />
      <GroupSep />
      <EditGroup />
      <GroupSep />
      <AnalyzeGroup />
    </div>
  );
}

/* ---------- formula bar ---------- */

function FormulaBar() {
  return (
    <div className="flex h-[54px] items-center border-t-2 border-black bg-[#262626]">
      <div className="ml-[19px] w-[126px] text-[23px] tracking-[-0.7px] text-[#e8e8e8]">C5</div>
      <svg className="h-[38px] w-[16px]" viewBox="0 0 16 38" fill="#cfcfcf"><path d="m8 0 7 13H1zM8 38l7-13H1z" /></svg>
      <div className="ml-[8px] h-[52px] w-[3px] bg-[#1d1d1d]" />
      <svg className="ml-[28px] h-[20px] w-[22px]" viewBox="0 0 22 20" fill="none" stroke="#5c5c5c" strokeWidth="4"><path d="m2 1 18 18M20 1 2 19" /></svg>
      <svg className="ml-[33px] h-[22px] w-[30px]" viewBox="0 0 30 22" fill="none" stroke="#4c4c4c" strokeWidth="4.500"><path d="m2 11 9 8L28 2" /></svg>
      <div className="ml-[32px] w-[44px] font-['Liberation_Serif'] text-[34px] leading-none tracking-[2px] text-[#9a9a9a] italic">fx</div>
      <div className="h-[38px] w-[2968px] shrink-0 bg-[#373737]" />
      <svg className="ml-[8px] h-[13px] w-[14px]" viewBox="0 0 14 13" fill="#cfcfcf"><path d="M0 0h14L7 13z" /></svg>
    </div>
  );
}

/* ---------- sheet ---------- */

const columns: { letter: string; w: string; head: string; sub: string }[] = [
  { letter: "A", w: "w-[146px]", head: "Identifier", sub: "XXX" },
  { letter: "B", w: "w-[514px]", head: "Task", sub: "Description" },
  { letter: "C", w: "w-[154px]", head: "Priority", sub: "Dropdown" },
  { letter: "D", w: "w-[164px]", head: "Estimated", sub: "Time (h)" },
  { letter: "E", w: "w-[164px]", head: "Actual", sub: "Time (h)" },
  { letter: "F", w: "w-[164px]", head: "Status", sub: "Dropdown" },
  { letter: "G", w: "w-[164px]", head: "Progress", sub: "% Complete" },
  { letter: "H", w: "w-[514px]", head: "Deliverables", sub: "Quanitifiable Output or Results from Task" },
  { letter: "I", w: "w-[514px]", head: "Impact", sub: "Value / Benefit of Achieving Task" },
  { letter: "J", w: "w-[514px]", head: "Notes", sub: "" },
  { letter: "K", w: "w-[128px]", head: "Custom", sub: "" },
  { letter: "L", w: "w-[128px]", head: "Custom", sub: "" },
];

const sections = [
  { title: "Research", track: "tracking-[0.1px]", indent: true, text: "Tasks related to literature review, data collection, data analysis, or writing up research findings." },
  { title: "Professional Development", track: "tracking-[0.4px]", indent: false, text: "Tasks related to attending conferences, networking, or learning new skills." },
  { title: "Administrative", track: "tracking-[0.7px]", indent: false, text: "Tasks related to organizing and managing your research, such as updating your progress spreadsheet, preparing reports, and maintaining your research data." },
];

const ten = [1, 2, 3, 4, 5, 6, 7, 8, 9, 10];

function RowNumber({ n, h, selected = false, last = false }: { n: number; h: string; selected?: boolean; last?: boolean }) {
  return (
    <div
      className={`flex w-[46px] shrink-0 items-center justify-center pt-[4px] ${h} ${
        selected ? "border-r-4 border-[#3b744a] bg-[#555555] pl-[2px]" : `border-r-2 border-r-[#bdbdbd] bg-[#171717] ${last ? "" : "border-b-2 border-b-[#5a5a5a]"}`
      }`}
    >
      {n}
    </div>
  );
}

function RowNumbers() {
  return (
    <div className="flex w-[46px] shrink-0 flex-col font-['Lato'] text-[22px] font-bold tracking-[-0.8px] text-white">
      <RowNumber n={1} h="h-[40px]" />
      <RowNumber n={2} h="h-[42px]" />
      {sections.map((s, i) => {
        const base = 3 + i * 12;
        return (
          <React.Fragment key={s.title}>
            <RowNumber n={base} h={i === 0 ? "h-[40px]" : "h-[42px]"} />
            <RowNumber n={base + 1} h="h-[38px]" last />
            {ten.map((t) => (
              <RowNumber key={t} n={base + 1 + t} h={t === 1 ? "h-[40px]" : "h-[36px]"} selected />
            ))}
          </React.Fragment>
        );
      })}
    </div>
  );
}

function ColumnHeader() {
  return (
    <div className="flex h-[44px] shrink-0 border-b-2 border-[#bdbdbd] bg-[#171717] font-['Lato'] text-[24px] font-bold text-white">
      <div className="flex w-[46px] shrink-0 items-end justify-end border-r-2 border-[#9a9a9a] pr-[4px] pb-[4px]">
        <svg className="h-[30px] w-[30px]" viewBox="0 0 30 30" fill="#565656"><path d="M30 0v30H0z" /></svg>
      </div>
      {columns.map((c) =>
        c.letter === "C" ? (
          <div key="C" className={`-mb-[2px] flex shrink-0 items-center justify-center border-b-4 border-[#3b744a] bg-[#595959] pt-[4px] ${c.w}`}>C</div>
        ) : (
          <div key={c.letter} className={`flex shrink-0 items-center justify-center border-r-2 border-[#565656] pt-[2px] ${c.w}`}>{c.letter}</div>
        )
      )}
    </div>
  );
}

function Selection({ first, className }: { first: boolean; className: string }) {
  return (
    <div className={`absolute left-[658px] w-[152px] border-2 border-white ${className}`}>
      {first && <div className="absolute top-0 left-0 h-[34px] w-[148px] bg-white" />}
      {first && <div className="absolute top-0 left-0 h-[32px] w-[148px] border-2 border-[#3b744a] bg-white" />}
      <div className="absolute -inset-[3px] border border-[#0e2231]" />
      {first && (
        <div className="absolute -top-[2px] left-[150px] flex h-[34px] w-[34px] items-center justify-center border-2 border-[#a5a5a5] border-t-[#14283a] border-l-[#14283a] bg-[#f8f8f8]">
          <svg className="h-[11px] w-[18px]" viewBox="0 0 18 11" fill="#7c7c7c"><path d="M0 0h18L9 11z" /></svg>
        </div>
      )}
    </div>
  );
}

function TaskRow({ n }: { n: number }) {
  return (
    <div className="flex h-[36px] shrink-0">
      {columns.map((c) => (
        <div key={c.letter} className={`flex h-[36px] shrink-0 border-r-[6px] border-[#182d3b] ${c.w}`}>
          <div
            className={`flex flex-1 items-center justify-center border-b-2 ${n === 10 ? "border-[#182d3b]" : c.letter === "C" ? "border-[#a4a4a4]" : "border-[#d3d3d3]"} ${
              c.letter === "C" ? "bg-[#c6c6c6]" : "bg-white"
            }`}
          >
            {c.letter === "A" && <span className="mt-[1px] -ml-[3px] text-[26px] tracking-[-1px]">{n}</span>}
          </div>
        </div>
      ))}
    </div>
  );
}

function Table() {
  return (
    <div className="flex w-[3270px] shrink-0 flex-col border-l-2 border-[#182d3b] font-['Lato'] text-[27px] leading-none whitespace-nowrap text-[#182d3b]">
      <div className="flex h-[38px] shrink-0 border-t-2 border-[#182d3b] text-[28px] font-black tracking-[0.3px]">
        {columns.map((c) => (
          <div key={c.letter} className={`flex shrink-0 items-center justify-center border-r-[6px] border-[#182d3b] bg-[#63a2d3] pr-[2px] ${c.w}`}>{c.head}</div>
        ))}
      </div>
      <div className="flex h-[42px] shrink-0 border-b-2 border-[#182d3b] tracking-[-0.1px]">
        {columns.map((c) => (
          <div key={c.letter} className={`flex shrink-0 items-center justify-center border-r-[6px] border-[#182d3b] bg-[#bfbfbf] pt-[3px] pr-[1px] ${c.letter === "I" ? "tracking-[-0.36px]" : ""} ${c.w}`}>{c.sub}</div>
        ))}
      </div>
      <div className="-ml-[2px] h-[2px] shrink-0 bg-[#a3a3a3]" />
      {sections.map((s, i) => (
        <div key={s.title} className="relative flex shrink-0 flex-col">
          <div className={`flex shrink-0 items-center bg-[#182d3b] pb-[6px] pl-[2px] text-[28px] font-black text-white ${s.track} ${i === 0 ? "h-[42px]" : "h-[44px]"}`}>{s.title}</div>
          <div className={`flex h-[40px] shrink-0 items-center border-r-[6px] border-b-[6px] border-[#182d3b] bg-[#bfbfbf] pb-[2px] tracking-[-0.16px] ${s.indent ? "pl-[10px]" : "pl-[2px]"}`}>{s.text}</div>
          {ten.map((n) => (
            <TaskRow key={n} n={n} />
          ))}
          <Selection first={i === 0} className={i === 0 ? "top-[80px] h-[362px]" : "top-[82px] h-[362px]"} />
        </div>
      ))}
    </div>
  );
}

function Margin() {
  return (
    <div className="flex flex-1 flex-col bg-white">
      <div className="h-[40px] shrink-0 border-b-2 border-[#d3d3d3]" />
      <div className="h-[42px] shrink-0 border-b-2 border-[#999999]" />
      {sections.map((s, i) => (
        <React.Fragment key={s.title}>
          <div className={`shrink-0 border-b-2 border-[#d3d3d3] ${i === 0 ? "h-[40px]" : "h-[42px]"}`} />
          <div className="h-[40px] shrink-0 border-b-2 border-[#d3d3d3]" />
          {ten.map((n) => (
            <div key={n} className={`shrink-0 border-b-2 border-[#d3d3d3] ${n === 1 ? "h-[38px]" : "h-[36px]"}`} />
          ))}
        </React.Fragment>
      ))}
    </div>
  );
}

function Sheet() {
  return (
    <div className="flex h-[1448px] shrink-0 flex-col overflow-hidden">
      <ColumnHeader />
      <div className="flex shrink-0 items-start">
        <RowNumbers />
        <Table />
        <Margin />
      </div>
    </div>
  );
}

/* ---------- sheet tabs and status bar ---------- */

function SheetTabs() {
  return (
    <div className="flex h-[54px] shrink-0 items-start border-b-2 border-black bg-[#323232] text-[24px] font-medium whitespace-nowrap text-[#7f7f7f] shadow-[inset_0_2px_0_#5f5f5f]">
      <div className="flex h-[52px] w-[121px] items-center pt-[2px] pl-[30px]">
        <svg className="h-[20px] w-[60px]" viewBox="0 0 60 20" fill="#5d5d5d"><path d="M14 0v20L0 10zM47 0v20l14-10z" /></svg>
      </div>
      <div className="flex h-[52px] w-[263px] items-center justify-center border-t-2 border-l-2 border-[#5a5a5a] bg-[#212121] pr-[5px] pb-[2px] tracking-[-0.4px]">To Be Scheduled</div>
      <div className="flex h-[44px] w-[282px] items-center justify-center bg-white pt-[8px] pr-[2px] font-bold tracking-[-0.55px] text-[#3d7f52] shadow-[0_3px_0_#5a5a5a]">Weekly PhD Tasks</div>
      <div className="flex h-[52px] w-[278px] items-center justify-center border-t-2 border-[#5a5a5a] bg-[#212121] pb-[2px] tracking-[-0.26px] shadow-[inset_-2px_0_0_#4d4d4d]">Annual PhD Goals</div>
      <div className="flex h-[46px] w-[76px] items-center justify-center border-r-2 border-[#5a5a5a] pt-[5px] pl-[2px]">
        <svg className="h-[20px] w-[20px]" viewBox="0 0 20 20" stroke="#b5b5b5" strokeWidth="3.400"><path d="M10 0v20M0 10h20" /></svg>
      </div>
    </div>
  );
}

function StatusBar() {
  return (
    <div className="flex h-[44px] shrink-0 items-center bg-[linear-gradient(180deg,#4b4b4b,#373737)] text-[24px] whitespace-nowrap text-[#f0f0f0]">
      <div className="ml-[49px] w-[110px] tracking-[-0.4px]">Ready</div>
      <svg className="h-[30px] w-[30px]" viewBox="0 0 30 30" fill="none" stroke="#fff" strokeWidth="2.400">
        <circle cx="5.500" cy="6" r="5" fill="#fff" stroke="none" />
        <path d="M6.500 10v14M12 2.500h14v22c0 3-3 4.500-5 4M25 2c4 0 4 1 4 6h-4" />
        <path d="M0 23h17c0 3 1 5 4 6H6c-4 0-6-2-6-6z" fill="#fff" stroke="none" />
      </svg>
      <svg className="ml-[34px] h-[32px] w-[32px]" viewBox="0 0 32 32" fill="none" stroke="#eee" strokeWidth="2">
        <circle cx="14" cy="4.500" r="3.500" />
        <path d="M10 9 3 5.500C1 6 1 8 2.500 9L9 12.500c.5 5-1 11-3.500 16 0 2.500 3 3 3.500 1L13 20M18 9l7-3.500c2 .5 2 2.500.5 3.500L19 12.500V16" />
        <path d="m18 19 11 12M29 19 18 31" />
      </svg>
      <div className="ml-[6px] tracking-[-0.08px]">Accessibility: Investigate</div>
      <div className="flex-1" />
      <div className="flex h-[44px] w-[74px] items-center justify-center bg-[#575757]">
        <svg className="h-[26px] w-[27px]" viewBox="0 0 27 26" fill="none" stroke="#fff" strokeWidth="2.200"><path d="M1.200 1.200h24.600v23.600H1.200zM9.400 1v24M17.600 1v24M1 9h25M1 17h25" /></svg>
      </div>
      <svg className="ml-[21px] h-[26px] w-[28px]" viewBox="0 0 28 26" fill="none" stroke="#fff" strokeWidth="2.200"><path d="M1.200 1.200h25.600v23.600H1.200zM7 5.500h14v15H7zM10 9.500h8M10 13h8M10 16.500h8" /></svg>
      <svg className="ml-[43px] h-[26px] w-[28px]" viewBox="0 0 28 26" fill="none" stroke="#fff" strokeWidth="2.200"><path d="M1.200 1.200h25.600v23.600H1.200zM9 1v14.500M17 1v14.500H1" /></svg>
      <div className="ml-[38px] h-[4px] w-[16px] bg-white" />
      <div className="ml-[14px] flex h-[8px] w-[200px] items-center rounded-full bg-[#757575]">
        <div className="ml-[83px] h-[32px] w-[32px] shrink-0 rounded-full bg-[#a0a0a0] shadow-[0_1px_2px_rgba(0,0,0,0.5)]" />
      </div>
      <svg className="ml-[14px] h-[16px] w-[16px]" viewBox="0 0 16 16" stroke="#fff" strokeWidth="3.400"><path d="M8 0v16M0 8h16" /></svg>
      <div className="mr-[49px] ml-[34px] tracking-[-0.4px]">100%</div>
    </div>
  );
}

/* ---------- dock ---------- */

function DockItem({ dot = false, children }: Kids & { dot?: boolean }) {
  return (
    <div className="flex w-[136px] shrink-0 flex-col items-center">
      <div className="flex h-[147px] w-[136px] items-center justify-center">{children}</div>
      <div className={`-mt-[2px] h-[8px] w-[8px] rounded-full ${dot ? "bg-[#b6eabb]" : ""}`} />
    </div>
  );
}

function Tile({ id, from, to, children }: Kids & { id: string; from: string; to: string }) {
  return (
    <svg className="h-[124px] w-[124px] drop-shadow-[0_2px_2px_rgba(0,0,0,0.3)]" viewBox="-10 -10 124 124">
      <defs>
        <linearGradient id={id} x1="0" y1="0" x2="0" y2="1">
          <stop offset="0" stopColor={from} />
          <stop offset="1" stopColor={to} />
        </linearGradient>
        <clipPath id={`${id}-clip`}><rect width="104" height="104" rx="24" /></clipPath>
      </defs>
      <rect width="104" height="104" rx="24" fill={`url(#${id})`} />
      {children}
    </svg>
  );
}

function Finder() {
  return (
    <Tile id="finder" from="#5ac8f8" to="#3071ea">
      <g clipPath="url(#finder-clip)">
        <path d="M57 0C48 20 44 42 44 60h15c0 16 1 30 5 44h40V0z" fill="#e4e6ec" />
      </g>
      <path d="M27 30v10M76 30v10" stroke="#26303c" strokeWidth="4.500" strokeLinecap="round" />
      <path d="M20 69c16 17 47 17 63 0" stroke="#15181d" strokeWidth="3.500" fill="none" strokeLinecap="round" />
    </Tile>
  );
}

const padColors = ["#7ae05c", "#f6bd3f", "#e88636", "#c9302a", "#a3a9ad", "#ec4c60", "#9146c9", "#3b8ef4", "#66cfa6"];

function Launchpad() {
  return (
    <Tile id="launchpad" from="#bccdc0" to="#b9c9bb">
      {padColors.map((c, i) => (
        <rect key={c} x={17.5 + (i % 3) * 25} y={17 + Math.floor(i / 3) * 25} width="18.500" height="18.500" rx="4.500" fill={c} />
      ))}
    </Tile>
  );
}

function AppStore() {
  return (
    <Tile id="appstore" from="#4fb4ee" to="#2458cf">
      <g stroke="#fff" strokeWidth="8.500" strokeLinecap="round" fill="none">
        <path d="M58 23 37 60M46 23l33 57M20 64h38M73 64h12M28 75l-2.500 5" />
      </g>
    </Tile>
  );
}

function Chrome() {
  return (
    <Tile id="chrome" from="#fafaf8" to="#f2f3ef">
      <circle cx="52" cy="52" r="45" fill="#4f9e54" />
      <path d="M91 29.500A45 45 0 0 1 52 97L72 63 71.500 40 52 29.500z" fill="#f4bc46" />
      <path d="M13 29.500A45 45 0 0 1 91 29.500H52L32 63.500z" fill="#dc5044" />
      <circle cx="52" cy="52" r="22" fill="#fff" />
      <circle cx="52" cy="52" r="17.500" fill="#4583ea" />
    </Tile>
  );
}

function WebClient() {
  return (
    <svg className="h-[110px] w-[110px]" viewBox="0 0 110 110">
      <defs>
        <clipPath id="ball"><circle cx="55" cy="55" r="54" /></clipPath>
        <linearGradient id="stem" gradientUnits="userSpaceOnUse" x1="40" y1="20" x2="80" y2="105">
          <stop offset="0" stopColor="#74ab42" /><stop offset="0.220" stopColor="#6aa65c" /><stop offset="0.480" stopColor="#3f88c9" /><stop offset="1" stopColor="#62c0ee" />
        </linearGradient>
      </defs>
      <circle cx="55" cy="55" r="54" fill="#e0e1e3" />
      <g clipPath="url(#ball)" fill="none">
        <path d="M80 2c10 14 14 28 12 46M3 62c10 2 20 8 24 18 6 14 22 16 34 8 10-8 14-14 16-20" stroke="#ccd7dd" strokeWidth="9" />
        <path d="M60 33c16 8 26 22 26 40-1 14-7 28-18 38" stroke="url(#stem)" strokeWidth="14" />
        <path d="M78 0C58 12 48 26 50 42c3 16 20 27 62 26" stroke="url(#stem)" strokeWidth="13" />
        <path d="M-2 64C6 38 22 28 42 28c8 0 14 2 20 6" stroke="#74ab42" strokeWidth="14" />
      </g>
    </svg>
  );
}

function Canva() {
  return (
    <svg className="h-[124px] w-[124px]" viewBox="-10 -10 124 124">
      <defs>
        <linearGradient id="canva" x1="0.200" y1="0" x2="0.800" y2="1">
          <stop offset="0.150" stopColor="#55bfc9" /><stop offset="0.500" stopColor="#4a87d6" /><stop offset="0.750" stopColor="#5145ee" /><stop offset="1" stopColor="#7a35dd" />
        </linearGradient>
      </defs>
      <rect width="104" height="104" rx="24" fill="url(#canva)" />
      <text x="52" y="62" textAnchor="middle" fontFamily="Liberation Serif, serif" fontStyle="italic" fontWeight="700" fontSize="38" textLength="86" lengthAdjust="spacingAndGlyphs" fill="#fff">Canva</text>
    </svg>
  );
}

function Obsidian() {
  return (
    <Tile id="obsidian" from="#242424" to="#191919">
      <path d="M53 8 32 27l-5 22 23 14 14-6-8-26z" fill="#c0aef0" />
      <path d="m53 8 20 23 2 20 9 13-14 24-15-29c-7-16-2-34-2-51z" fill="#9c80e2" />
      <path d="M27 46 17 68l22 23 3-30z" fill="#6a42cc" />
      <path d="M39 91c2-12 0-22 4-31 12 0 22 6 28 16l-2 19z" fill="#5534b4" />
    </Tile>
  );
}

function Office({ id, letter, bands, tag, round = false }: { id: string; letter: string; bands: [string, string][]; tag: string; round?: boolean }) {
  return (
    <Tile id={id} from="#ffffff" to="#ffffff">
      <defs><clipPath id={`${id}-doc`}>{round ? <circle cx="54" cy="52" r="35" /> : <rect x="27" y="17" width="58" height="69" rx="4" />}</clipPath></defs>
      <g clipPath={`url(#${id}-doc)`}>
        {bands.map(([l, r], i) => {
          const h = 70 / bands.length;
          return (
            <g key={i}>
              <rect x="18" y={17 + i * h} width="37" height={h + 1} fill={l} />
              <rect x="54" y={17 + i * h} width="36" height={h + 1} fill={r} />
            </g>
          );
        })}
      </g>
      <rect x="9" y="32" width="39" height="39" rx="4" fill={tag} />
      <text x="28.500" y="62" textAnchor="middle" fontFamily="Open Sans, sans-serif" fontWeight="700" fontSize="29" fill="#fff">{letter}</text>
    </Tile>
  );
}

function PyCharm() {
  return (
    <svg className="h-[120px] w-[120px]" viewBox="0 0 120 120">
      <path d="m10 20 42-18 26 15-20 60-16 40L2 94z" fill="#5bd897" />
      <path d="m10 20 20-5-16 60L2 94z" fill="#9be65d" />
      <path d="m46 100 24-10-28 27z" fill="#3f9fd0" />
      <path d="m90 2 4 34H60z" fill="#a9ee58" />
      <path d="m96 30 22 18-12 22-12 4z" fill="#45c3ee" />
      <path d="m104 50 16 57-38 11-46-14 6-20z" fill="#f6f25e" />
      <path d="m84 102 36 5-38 11z" fill="#b8ec54" />
      <rect x="23" y="24" width="74" height="72" fill="#000" />
      <text x="31" y="60" fontFamily="Open Sans, sans-serif" fontWeight="700" fontSize="37" textLength="52" lengthAdjust="spacingAndGlyphs" fill="#fff">PC</text>
      <rect x="32" y="82" width="28" height="5" fill="#fff" />
    </svg>
  );
}

function Terminal() {
  return (
    <Tile id="terminal" from="#cfdfe6" to="#7c7c7c">
      <rect x="4" y="4" width="96" height="96" rx="20" fill="#000" />
      <rect x="11" y="12" width="82" height="80" rx="14" fill="#262626" />
      <path d="m19 21 10 6.500L19 34" stroke="#fff" strokeWidth="3" fill="none" />
      <path d="M35 39h15" stroke="#fff" strokeWidth="3.500" />
    </Tile>
  );
}

function Discord() {
  return (
    <Tile id="discord" from="#7484ee" to="#5567ea">
      <g transform="translate(13 24) scale(3.270)">
        <path fill="#fff" d="M20.317 1.370a19.800 19.800 0 0 0-4.885-1.515.074.074 0 0 0-.079.037c-.21.375-.444.864-.608 1.250a18.270 18.270 0 0 0-5.487 0 12.640 12.640 0 0 0-.617-1.250.077.077 0 0 0-.079-.037A19.740 19.740 0 0 0 3.677 1.370a.07.07 0 0 0-.032.027C.533 6.046-.32 10.580.099 15.057a.082.082 0 0 0 .031.057 19.900 19.900 0 0 0 5.993 3.030.078.078 0 0 0 .084-.028c.462-.63.874-1.295 1.226-1.994a.076.076 0 0 0-.041-.106 13.100 13.100 0 0 1-1.872-.892.077.077 0 0 1-.008-.128c.126-.094.252-.192.372-.292a.074.074 0 0 1 .077-.01c3.928 1.793 8.180 1.793 12.062 0a.074.074 0 0 1 .078.01c.12.098.246.198.373.292a.077.077 0 0 1-.006.127 12.300 12.300 0 0 1-1.873.892.077.077 0 0 0-.041.107c.36.698.772 1.362 1.225 1.993a.076.076 0 0 0 .084.028 19.840 19.840 0 0 0 6.002-3.030.077.077 0 0 0 .032-.054c.5-5.177-.838-9.674-3.549-13.660a.061.061 0 0 0-.031-.030zM8.020 12.330c-1.183 0-2.157-1.085-2.157-2.419 0-1.333.956-2.419 2.157-2.419 1.210 0 2.176 1.096 2.157 2.420 0 1.333-.956 2.418-2.157 2.418zm7.975 0c-1.183 0-2.157-1.085-2.157-2.419 0-1.333.955-2.419 2.157-2.419 1.210 0 2.176 1.096 2.157 2.420 0 1.333-.946 2.418-2.157 2.418z" />
      </g>
    </Tile>
  );
}

function Slack() {
  return (
    <Tile id="slack" from="#ffffff" to="#fafafa">
      <g fill="#62c1ea"><path d="M49 31h-7a7.500 7.500 0 1 1 7-7.500z" /><rect x="15" y="35" width="35" height="15" rx="7.500" /></g>
      <g fill="#5ab282"><rect x="54" y="16" width="15" height="34" rx="7.500" /><path d="M73 50v-7a7.500 7.500 0 1 1 7 7z" /></g>
      <g fill="#e2b04a"><rect x="54" y="54" width="35" height="15" rx="7.500" /><path d="M54 73h7a7.500 7.500 0 1 1-7 7z" /></g>
      <g fill="#cc335a"><path d="M31 54v7a7.500 7.500 0 1 1-7-7z" /><rect x="35" y="54" width="15" height="34" rx="7.500" /></g>
    </Tile>
  );
}

function Settings() {
  return (
    <Tile id="settings" from="#d5e0e6" to="#8c8a88">
      <circle cx="52" cy="52" r="45" fill="#2c2d2f" />
      <g fill="none">
        <circle cx="52" cy="52" r="40" stroke="#b3b8bb" strokeWidth="4" strokeDasharray="2.200 2" />
        <circle cx="52" cy="52" r="36" stroke="#a5aaad" strokeWidth="5" />
        <circle cx="52" cy="52" r="26" stroke="#8a8f92" strokeWidth="3" strokeDasharray="2 1.600" />
        <circle cx="52" cy="52" r="23" stroke="#9a9fa2" strokeWidth="4" />
        <circle cx="52" cy="52" r="18" fill="#6f7070" />
        <path d="M52 52h36M52 52 36 22M52 52 36 82" stroke="#b9bec1" strokeWidth="4.500" />
        <circle cx="52" cy="52" r="4" fill="#3a3b3c" stroke="#b9bec1" strokeWidth="2" />
      </g>
    </Tile>
  );
}

function Folder() {
  return (
    <svg className="h-[102px] w-[120px] drop-shadow-[0_2px_2px_rgba(0,0,0,0.35)]" viewBox="0 0 120 102">
      <path d="M1 8a7 7 0 0 1 7-7h26c8 0 10 10 20 10h58a7 7 0 0 1 7 7v30H1z" fill="#4fa2dc" />
      <path d="M1 25a7 7 0 0 1 7-7h104a7 7 0 0 1 7 7v69a6 6 0 0 1-6 6H7a6 6 0 0 1-6-6z" fill="#73c6f9" />
      <path d="M1 91h118v3a6 6 0 0 1-6 6H7a6 6 0 0 1-6-6z" fill="#5cb0e8" />
      <circle cx="60" cy="55" r="23" fill="#4c9bda" />
      <path d="M60 43v22m-9-9 9 9 9-9" stroke="#75c6f8" strokeWidth="3" fill="none" strokeLinecap="round" />
    </svg>
  );
}

function Trash() {
  return (
    <svg className="h-[120px] w-[92px]" viewBox="0 0 92 120">
      <defs>
        <linearGradient id="bin" x1="0" y1="0" x2="1" y2="0">
          <stop offset="0" stopColor="#555b5c" /><stop offset="0.350" stopColor="#7b7f81" /><stop offset="0.650" stopColor="#707578" /><stop offset="1" stopColor="#4e5455" />
        </linearGradient>
      </defs>
      <path d="M1 17h90l-9 93c-1 6-12 9-36 9s-35-3-36-9z" fill="url(#bin)" />
      <ellipse cx="46" cy="17" rx="45" ry="10" fill="#6b7172" />
      <path d="M6 14 14 6l8 2 8-7 9 7 7-2 11-5 11 7 8-1 10 8-3 8-18 6-30 1-26-5z" fill="#e6e6e4" />
      <path d="m14 10 10 3-4 6zM30 3l5 9 8-3zM52 12l12 3-9 9zM72 8l6 10-12-3zM24 16l10 8-12-1z" fill="#6d6d6b" />
      <path d="m32 12 8-1 3 6-7 3z" fill="#56c25c" />
      <path d="m36 16 6 2-3 4z" fill="#3aa4e0" />
      <path d="m54 13 8 2-1 7-6-3z" fill="#3650a0" />
      <path d="m48 18 4-4 1 10z" fill="#d77a3a" />
      <path d="m64 18 6-2-1 7z" fill="#a03a30" />
      <path d="M1 17c4 13 86 13 90 0l-1 9c-6 10-82 10-88 0z" fill="#7d8284" opacity="0.850" />
      <path d="M12 92c10 8 58 8 69 0l-2 18c-1 5-12 8-33 8s-31-3-33-8z" fill="#a0a5a7" opacity="0.400" />
    </svg>
  );
}

function Dock() {
  return (
    <div className="mt-[4px] ml-[489px] flex h-[158px] w-[2382px] items-start rounded-[50px] bg-[linear-gradient(180deg,rgba(38,75,44,0.75),rgba(48,92,54,0.72))] pl-[5px] shadow-[inset_0_0_0_2px_rgba(160,210,165,0.3),0_0_0_1px_rgba(20,50,25,0.6)]">
      <DockItem dot><Finder /></DockItem>
      <DockItem><Launchpad /></DockItem>
      <DockItem><AppStore /></DockItem>
      <DockItem dot><Chrome /></DockItem>
      <DockItem><WebClient /></DockItem>
      <DockItem><Canva /></DockItem>
      <DockItem dot><Obsidian /></DockItem>
      <DockItem><Office id="word" letter="W" tag="#2259b8" bands={[["#5ba6e8", "#5ba6e8"], ["#4381d0", "#4381d0"], ["#2a5dbc", "#2a5dbc"], ["#1b4290", "#1b4290"]]} /></DockItem>
      <DockItem dot><Office id="excel" letter="X" tag="#2f7a41" bands={[["#4da16b", "#61bf87"], ["#3b7f4c", "#4da16b"], ["#2d5f3c", "#3b7f4c"], ["#2d5638", "#2d5f3c"]]} /></DockItem>
      <DockItem><Office id="ppt" letter="P" tag="#bb4225" round bands={[["#de7152", "#f09474"], ["#c85b39", "#c85b39"]]} /></DockItem>
      <DockItem dot><PyCharm /></DockItem>
      <DockItem dot><Terminal /></DockItem>
      <DockItem><Discord /></DockItem>
      <DockItem dot><Slack /></DockItem>
      <DockItem><Settings /></DockItem>
      <div className="mt-[20px] ml-[30px] h-[118px] w-[2px] shrink-0 bg-[#6a9a72]" />
      <div className="flex h-[147px] w-[187px] shrink-0 items-center justify-center pl-[6px]"><Folder /></div>
      <div className="flex h-[147px] shrink-0 items-center pb-[4px]"><Trash /></div>
    </div>
  );
}

export default function App() {
  return (
    <div className="flex h-[2100px] w-[3360px] flex-col overflow-hidden bg-[linear-gradient(180deg,#2c3f9c_0,#2c3f9c_200px,#4c8053_400px)] font-['Inter',sans-serif]">
      <MenuBar />
      <div className="relative z-10 flex h-[1878px] shrink-0 flex-col rounded-[20px] bg-[#282828] shadow-[0_0_0_2px_#000,0_36px_60px_rgba(0,0,0,0.75)]">
        <TitleBar />
        <TabRow />
        <Ribbon />
        <FormulaBar />
        <div className="h-[6px] shrink-0 border-t-2 border-b-2 border-[#b9b9b9] bg-white" />
        <Sheet />
        <SheetTabs />
        <div className="flex h-[44px] shrink-0 flex-col overflow-hidden rounded-b-[20px]">
          <StatusBar />
        </div>
        <div className="pointer-events-none absolute inset-0 rounded-[20px] shadow-[inset_0_0_0_2px_rgba(255,255,255,0.22)]" />
      </div>
      <div className="relative flex-1 bg-[linear-gradient(90deg,#68a566_0%,#63a062_30%,#5b945f_60%,#4a7b53_85%,#47774f_100%)]">
        <svg className="absolute inset-0 h-[172px] w-[3360px]" viewBox="0 0 3360 172" preserveAspectRatio="none">
          <defs>
            <linearGradient id="hill" x1="0" y1="0" x2="1" y2="0"><stop offset="0" stopColor="#4f8856" /><stop offset="0.500" stopColor="#548d56" /><stop offset="1" stopColor="#467a4e" /></linearGradient>
          </defs>
          <path d="M2680 172C2850 130 3100 60 3360 22v150z" fill="url(#hill)" />
        </svg>
      </div>
      <div className="relative z-20 -mt-[172px] h-[172px] shrink-0">
        <Dock />
      </div>
    </div>
  );
}
